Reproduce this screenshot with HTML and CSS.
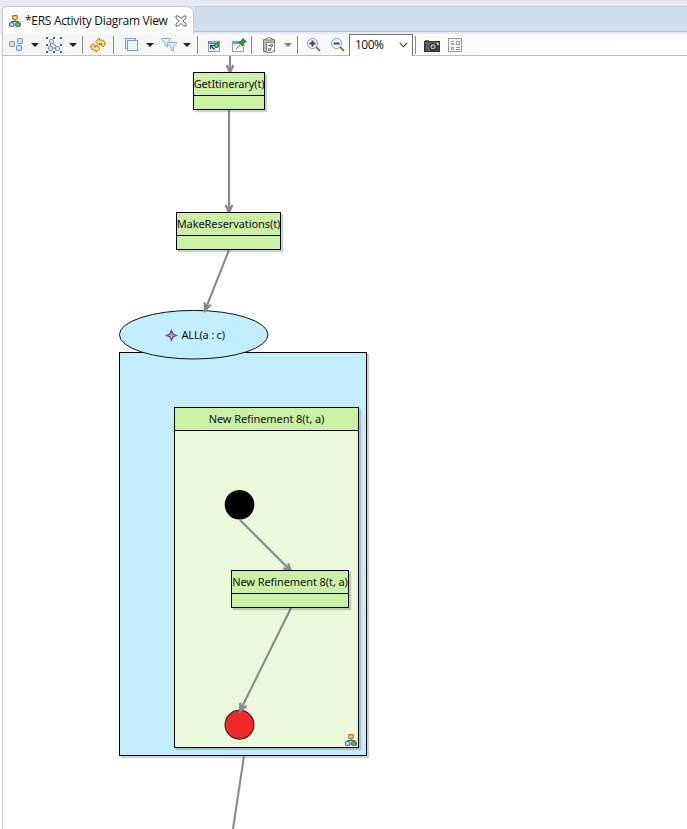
FILE: index.html
```
<!DOCTYPE html>
<html lang="en">
<head>
<meta charset="utf-8">
<title>ERS Activity Diagram View</title>
<link rel="stylesheet" href="styles.css">
</head>
<body>
<svg class="defs" width="0" height="0" aria-hidden="true">
  <symbol id="arrow" viewBox="0 0 8 4"><path d="M0 0H8L4 4Z" fill="#222"/></symbol>
  <symbol id="tree" viewBox="0 0 12 12">
    <path d="M6 4V7M2.5 9V6.5H9.5V9" fill="none" stroke="#3557a4"/>
    <rect x="3.7" y=".6" width="4.6" height="3.6" rx="1" fill="#ffe071" stroke="#a8640b" stroke-width="1.1"/>
    <rect x=".6" y="7.8" width="4.3" height="3.4" rx="1" fill="#dcecff" stroke="#2f57a8" stroke-width="1.1"/>
    <rect x="6.7" y="7.8" width="4.5" height="3.4" rx="1" fill="#8cbd5a" stroke="#2c6b25" stroke-width="1.1"/>
  </symbol>
</svg>
<header class="tabs">
  <div class="tab">
    <svg width="12" height="12"><use href="#tree"/></svg>
    <span class="title">*ERS Activity Diagram View</span>
    <svg class="close" width="12" height="12" viewBox="0 0 12 12"><path d="M1 1H3.5L6 3.7 8.5 1H11V3L8 6 11 9V11H8.5L6 8.3 3.5 11H1V9L4 6 1 3Z" fill="#fff" stroke="#555" stroke-width=".9"/></svg>
  </div>
  <div class="rest"></div>
</header>
<nav class="toolbar">
  <svg viewBox="0 0 16 16"><g fill="#cfe0f3" stroke="#7590b8"><rect x="1.5" y="4.5" width="5" height="5" rx=".7"/><rect x="9.5" y="1.5" width="5" height="5" rx=".7"/><rect x="8.5" y="8.5" width="5" height="5" rx=".7"/></g></svg>
  <svg class="arrow"><use href="#arrow"/></svg>
  <svg viewBox="0 0 16 16"><path d="M5 4L12 11M5 5L4 11H12" fill="none" stroke="#53698f"/><g fill="#cfe0f3" stroke="#7590b8"><rect x="3.5" y="2.5" width="4" height="4" rx="1"/><rect x="2.5" y="9.5" width="4" height="4" rx="1"/><rect x="9.5" y="9.5" width="4" height="4" rx="1"/></g><path d="M0 0h2v2H0zM7 0h2v2H7zM14 0h2v2h-2zM0 7h2v2H0zM14 7h2v2h-2zM0 14h2v2H0zM7 14h2v2H7zM14 14h2v2h-2z" fill="#3b5d94"/></svg>
  <svg class="arrow"><use href="#arrow"/></svg>
  <i class="sep"></i>
  <svg viewBox="0 0 16 16"><g fill="#ffe07a" stroke="#b97a10" stroke-linejoin="round"><path d="M5.5 5L9.5 1V3H12Q15 3.5 15 7L15.5 7 13 10 10.5 7.5H12Q12 6 9.5 6.3V8.5Z"/><path d="M10 11.5L6 15.3V13.3H4Q1 12.8 1 9.5H.4L3 6.5 5.5 9H4Q4 10.3 6 10V8Z"/></g></svg>
  <i class="sep"></i>
  <svg class="end" viewBox="0 0 16 16"><rect x="1.5" y="1.5" width="10" height="10" fill="#d9f0f5" stroke="#7d9dbb"/><rect x="3.5" y="3.5" width="10" height="10" fill="#e6f6f8" stroke="#7d9dbb"/></svg>
  <svg class="arrow"><use href="#arrow"/></svg>
  <svg viewBox="0 0 16 16"><g fill="#d9effa" stroke="#8ab2ce"><path d="M.5 1.5H9.5V3L6.5 6V10L4 8.5V6L.5 3Z"/><path d="M6.5 5.5H15.5V7L12.5 9.5V14.5L10 13V9.5L6.5 7Z"/></g></svg>
  <svg class="arrow"><use href="#arrow"/></svg>
  <i class="sep"></i>
  <svg viewBox="0 0 16 16"><rect x="2.5" y="4.5" width="11" height="10" fill="#edf7fc" stroke="#85a4b5"/><path d="M2 4h12v3H2z" fill="#498cc0"/><path d="M3 5h8" stroke="#a6d7ee"/><path d="M4 8h4v1H6l3 3-1 1-3-3v2H4z" fill="#234267"/><circle cx="10.5" cy="8.5" r="1.9" fill="#8fcf90" stroke="#1d6b40" stroke-width="1.2"/></svg>
  <svg viewBox="0 0 16 16"><rect x="1.5" y="4.5" width="11" height="10" fill="#fffce9" stroke="#85a4b5"/><path d="M1 4h9v3H1z" fill="#69aacd"/><path d="M5 12L9 8" stroke="#777"/><path d="M8 5.5L10 4.5 12 1.5 15 4.5 12 6.5 11.5 9 7.5 5Z" fill="#399447" stroke="#1c6830" stroke-width="1"/></svg>
  <i class="sep end"></i>
  <svg class="end" viewBox="0 0 16 16"><path d="M1.5 2.5H12.5V14.5H1.5Z" fill="#bbb" stroke="#777"/><path d="M4 3V1.5h1.5L6 .5h2l.5 1H10V3Z" fill="#eee" stroke="#888"/><path d="M4.5 5.5H12.5V13L10 15.5H4.5Z" fill="#f5f5f5" stroke="#888"/><path d="M8.5 7.5h2v2h-2zM6 8.5h2M6.5 11.5h2v2h-2zM9 11h1" fill="none" stroke="#777"/></svg>
  <svg class="arrow faded"><use href="#arrow"/></svg>
  <i class="sep"></i>
  <svg viewBox="0 0 16 16"><path d="M10 10L14 14" stroke="#9b713f" stroke-width="2"/><circle cx="6.5" cy="6.5" r="5" fill="#f5f9ff" stroke="#8a98aa"/><path d="M3.5 6.5h6M6.5 3.5v6" stroke="#2b459c" stroke-width="2"/></svg>
  <svg class="start" viewBox="0 0 16 16"><path d="M10 10L14 14" stroke="#9b713f" stroke-width="2"/><circle cx="6.5" cy="6.5" r="5" fill="#f5f9ff" stroke="#8a98aa"/><path d="M3.5 6.5h6" stroke="#2b459c" stroke-width="2"/></svg>
  <div class="combo"><span>100%</span><svg width="9" height="6" viewBox="0 0 9 6"><path d="M.7.8L4.5 4.6 8.3.8" fill="none" stroke="#444" stroke-width="1.1"/></svg></div>
  <i class="sep end"></i>
  <svg viewBox="0 0 16 16"><rect x="1" y="3" width="4" height="2" fill="#777"/><rect x=".5" y="4.5" width="15" height="10" fill="#454545" stroke="#333"/><path d="M1 6h14" stroke="#888"/><path d="M3 7v7M5 7v7" stroke="#777"/><circle cx="9" cy="9.7" r="3.2" fill="#c9d1ce" stroke="#111"/><circle cx="9" cy="9.7" r="1.5" fill="#41504a"/><path d="M13 6h2v2h-2z" fill="#b7d19c"/></svg>
  <svg viewBox="0 0 16 16"><g fill="#f5f5f5" stroke="#999"><rect x=".5" y="1.5" width="13" height="13"/><path d="M3 4.5h3M3.5 7.5h2v-1h-2zM8.5 4.5h3v3h-3zM3.5 10.5h2v2h-2zM8 10.5h4M8 12.5h4"/></g></svg>
</nav>
<main class="canvas">
  <div class="scope"></div>
  <div class="node refinement"><div class="label">New Refinement 8(t, a)</div><svg class="badge" width="12" height="12"><use href="#tree"/></svg></div>
  <svg class="edges" width="687" height="773" viewBox="0 56 687 773">
    <defs><marker id="head" markerUnits="userSpaceOnUse" markerWidth="12" markerHeight="12" refX="9" refY="6" orient="auto"><path d="M1.5 2.6L9 6 1.5 9.4" fill="none" stroke="#8a8a8a" stroke-width="2.2"/><path d="M3 3.5L9 6 3 8.5Z" fill="#8a8a8a"/></marker></defs>
    <ellipse cx="193.7" cy="334.7" rx="74.3" ry="24.3" fill="#c2eeff" stroke="#111"/>
    <circle cx="239.5" cy="504.7" r="14.8" fill="#000"/>
    <circle cx="239.5" cy="724.7" r="14.4" fill="#f02a2a" stroke="#222" stroke-width="1.1"/>
    <g fill="none" stroke="#8a8a8a" stroke-width="2.1" marker-end="url(#head)">
      <path d="M230 56V72.5"/><path d="M229 110V212.5"/><path d="M229 250L205 310.5"/><path d="M240 520L291 571"/><path d="M291 608L240 711"/>
    </g>
    <path d="M244 756L233 829" stroke="#8a8a8a" stroke-width="2.1"/>
    <path d="M171.5 330.5L173 334 176.5 335.5 173 337 171.5 340.5 170 337 166.5 335.5 170 334Z" fill="#c59add" stroke="#70439a" stroke-width="1.2"/>
  </svg>
  <div class="all">ALL(a : c)</div>
  <div class="node get"><div class="label">GetItinerary(t)</div></div>
  <div class="node make"><div class="label">MakeReservations(t)</div></div>
  <div class="node inner"><div class="label">New Refinement 8(t, a)</div></div>
</main>
</body>
</html>
```
FILE: styles.css
```
* { box-sizing: border-box; }
body {
  margin: 0;
  width: 687px;
  height: 829px;
  overflow: hidden;
  display: flex;
  flex-direction: column;
  background: #fff;
  color: #111;
  font-family: "Noto Sans", sans-serif;
}
svg { display: block; }
.defs { position: absolute; }
.tabs {
  height: 34px;
  flex: none;
  display: flex;
  padding: 6px 0 0 2px;
  background: #e6e9f7;
}
.tab {
  width: 192px;
  display: flex;
  align-items: center;
  padding-left: 6px;
  background: linear-gradient(#fff, #fcfcfd);
  border: 1px solid #c2cad7;
  border-bottom: 0;
  border-radius: 5px 7px 0 0;
}
.title {
  width: 146px;
  margin-left: 4px;
  font: 12px/16px "Open Sans", sans-serif;
  letter-spacing: -.3px;
  white-space: nowrap;
}
.close { margin-left: 4px; }
.rest {
  height: 26px;
  flex: 1;
  background: #d0dff0;
  border-top: 1px solid #c2cad7;
  border-bottom: 1px solid #b4bdd3;
}
.toolbar {
  height: 22px;
  flex: none;
  display: grid;
  grid-template-columns: 16px 21px 18px 19px 1px 30px 1px 26px 20px 17px 20px 1px 31px 20px 3px 26px 19px 1px 32px 19px 64px 3px 32px 16px;
  align-items: center;
  justify-items: center;
  margin-left: 2px;
  padding-left: 5px;
  border-left: 1px solid #c2cad7;
  border-bottom: 1px solid #bfbfbf;
  background: linear-gradient(90deg, #f5f5f5, #fcfcfc 70%, #fff);
}
.toolbar > svg { width: 16px; height: 16px; }
.toolbar > .arrow { width: 8px; height: 4px; }
.toolbar > .faded { opacity: .55; }
.toolbar > .end { justify-self: end; }
.toolbar > .start { justify-self: start; }
.sep { width: 1px; height: 18px; background: #8b8b8b; }
.combo {
  width: 64px;
  height: 22px;
  display: flex;
  align-items: center;
  justify-content: space-between;
  padding: 0 4px 1px 5px;
  background: #fff;
  border: 1px solid #777;
  border-bottom: 0;
  font: 12px/20px "Open Sans", sans-serif;
  letter-spacing: -.5px;
}
.canvas {
  position: relative;
  flex: 1;
  margin-left: 2px;
  border-left: 1px solid #c2cad7;
}
.edges { position: absolute; left: -3px; top: 0; }
.scope, .node {
  position: absolute;
  border: 1px solid #000;
  box-shadow: 2px 2px 1px rgba(70, 60, 80, .25);
}
.scope { left: 116px; top: 296px; width: 248px; height: 404px; background: #c2eeff; }
.node { height: 38px; background: #cbf1a5; }
.label {
  height: 23px;
  display: flex;
  justify-content: center;
  border-bottom: 1px solid #000;
  background: #cbf1a5;
  font-size: 11px;
  line-height: 21px;
  letter-spacing: -.08px;
  white-space: nowrap;
}
.get { left: 190px; top: 16px; width: 72px; }
.get .label { letter-spacing: -.15px; }
.make { left: 173px; top: 156px; width: 105px; }
.inner { left: 228px; top: 514px; width: 118px; }
.refinement { left: 171px; top: 351px; width: 185px; height: 341px; background: #eaf8dc; }
.badge { position: absolute; right: 1px; bottom: 1px; }
.all {
  position: absolute;
  left: 178.5px;
  top: 271px;
  font-size: 11px;
  line-height: 16px;
  letter-spacing: -.2px;
}
```
